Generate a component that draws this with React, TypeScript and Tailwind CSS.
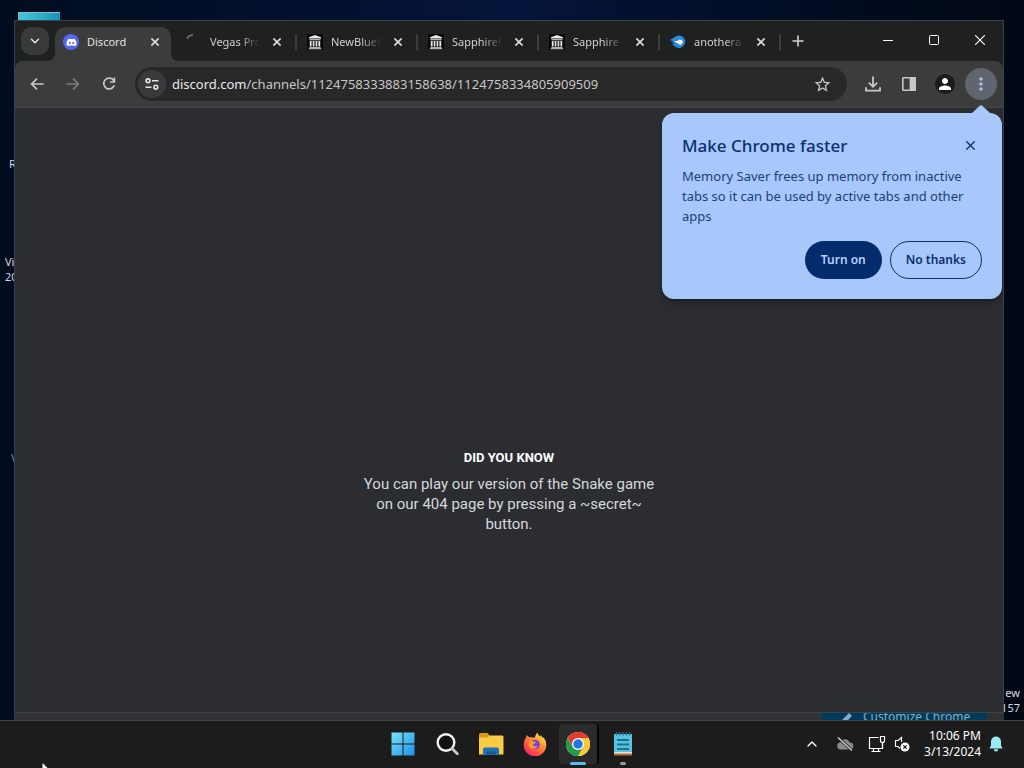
import { ChevronDown, ChevronUp, X } from "lucide-react";
import type { ReactNode } from "react";
import { FaDiscord } from "react-icons/fa";
import { MdMoreVert, MdPerson, MdStarBorder } from "react-icons/md";

type Tab = { title: string; icon: ReactNode };

const TABS: Tab[] = [
  { title: "Vegas Pro", icon: <SpinnerIcon /> },
  { title: "NewBlueF", icon: <ArchiveIcon /> },
  { title: "SapphireF", icon: <ArchiveIcon /> },
  { title: "Sapphire P", icon: <ArchiveIcon /> },
  { title: "anothera", icon: <CometIcon /> },
];

export default function App() {
  return (
    <div className="flex h-screen flex-col overflow-hidden bg-[#010a1b] font-['Noto_Sans',sans-serif]">
      <main className="relative flex min-h-0 flex-1 bg-linear-to-r from-[#010c1f] via-[#04143a] to-[#010814] pl-3.5 pr-5 pt-5">
        <DesktopIcons />
        <div className="relative flex min-w-0 flex-1 flex-col">
          <BrowserWindow />
          <BackWindow />
        </div>
      </main>
      <Taskbar />
    </div>
  );
}

function DesktopIcons() {
  return (
    <div className="text-[11px] leading-[15px] text-[#d5dae2]">
      <div className="absolute left-[18px] top-3 h-2.5 w-[42px] border-t border-[#7fb9cf] bg-linear-to-r from-[#45c9d8] to-[#1795b8]" />
      <span className="absolute left-[9px] top-[156px]">R</span>
      <span className="absolute left-[5px] top-[254px]">
        Vi
        <br />
        20
      </span>
      <span className="absolute left-[11px] top-[450px] text-[#8b919b]">V</span>
      <span className="absolute right-1 top-[685px] text-right">
        ew
        <br />
        157
      </span>
    </div>
  );
}

function BrowserWindow() {
  return (
    <section className="relative z-10 flex min-h-0 flex-1 flex-col border border-[#3a434b] bg-[#1f2120]">
      <TabStrip />
      <Toolbar />
      <DiscordPage />
    </section>
  );
}

function TabStrip() {
  return (
    <div className="flex h-10 shrink-0 items-end pl-1.5">
      <button
        aria-label="Search tabs"
        className="mb-1.5 mr-1.5 flex size-7 shrink-0 items-center justify-center rounded-[10px] bg-[#383938] text-[#e3e3e3]"
      >
        <ChevronDown size={14} strokeWidth={2.5} />
      </button>
      <div className="relative mr-[5px] flex h-[34px] w-[116px] shrink-0 items-center rounded-t-[10px] bg-[#3c3c3c] px-2 pb-1.5 pt-0.5 before:absolute before:-left-2 before:bottom-0 before:size-2 before:bg-[radial-gradient(circle_at_0_0,transparent_8px,#3c3c3c_8px)] after:absolute after:-right-2 after:bottom-0 after:size-2 after:bg-[radial-gradient(circle_at_100%_0,transparent_8px,#3c3c3c_8px)]">
        <span className="flex size-4 items-center justify-center rounded-full bg-[#5865f2] text-white">
          <FaDiscord size={11} />
        </span>
        <span className="ml-2 flex-1 text-[11px] text-[#e3e3e3]">Discord</span>
        <CloseTab title="Discord" />
      </div>
      {TABS.map((tab, i) => (
        <div key={i} className="flex h-[34px] w-[121px] shrink-0 items-center pb-1.5 pl-2.5 pt-0.5">
          {tab.icon}
          <span className="ml-2 w-[50px] overflow-hidden whitespace-nowrap mask-r-from-60% text-[11px] text-[#d0d0d0]">
            {tab.title}
          </span>
          <span className="flex-1" />
          <CloseTab title={tab.title} />
          <span className="ml-2.5 h-4 w-0.5 bg-[#3b3d3c]" />
        </div>
      ))}
      <button aria-label="New tab" className="mb-1.5 ml-[3px] flex size-7 items-center justify-center text-[#d0d0d0]">
        <svg width="12" height="12" stroke="currentColor" strokeWidth="1.6">
          <path d="M6 0.5v11M0.5 6h11" />
        </svg>
      </button>
      <div className="ml-auto flex h-full pb-0.5 text-white">
        <button aria-label="Minimize" className="flex w-[46px] items-center justify-center">
          <svg width="10" height="10" stroke="currentColor">
            <path d="M0 5.5h10" />
          </svg>
        </button>
        <button aria-label="Maximize" className="flex w-[46px] items-center justify-center">
          <svg width="10" height="10" fill="none" stroke="currentColor">
            <rect x="0.5" y="0.5" width="9" height="9" rx="1" />
          </svg>
        </button>
        <button aria-label="Close" className="flex w-[46px] items-center justify-center">
          <svg width="10" height="10" stroke="currentColor" strokeWidth="1.1">
            <path d="M0 0l10 10M10 0L0 10" />
          </svg>
        </button>
      </div>
    </div>
  );
}

function CloseTab({ title }: { title: string }) {
  return (
    <button aria-label={`Close ${title}`} className="flex size-4 items-center justify-center text-[#dedede]">
      <svg width="8" height="8" stroke="currentColor" strokeWidth="1.6">
        <path d="M0.4 0.4l7.2 7.2M7.6 0.4L0.4 7.6" />
      </svg>
    </button>
  );
}

function Toolbar() {
  return (
    <div className="flex h-[47px] shrink-0 items-center gap-1 rounded-t-lg border-b border-[#444546] bg-[#3c3c3c] px-1.5 text-[#c7c7c7]">
      <ToolButton label="Back">
        <svg width="14" height="12" fill="none" stroke="currentColor" strokeWidth="1.7">
          <path d="M13.5 6H1.5M7 0.7L1.6 6L7 11.3" />
        </svg>
      </ToolButton>
      <ToolButton label="Forward">
        <svg width="14" height="12" fill="none" stroke="#7b7b7b" strokeWidth="1.7">
          <path d="M0.5 6h12M7 0.7L12.4 6L7 11.3" />
        </svg>
      </ToolButton>
      <ToolButton label="Reload">
        <svg width="14" height="14" fill="none" stroke="currentColor" strokeWidth="1.7">
          <path d="M11.7 3.6A5.4 5.4 0 1 0 12.3 8.2M12.4 0.6V5H8" />
        </svg>
      </ToolButton>
      <div className="mx-1.5 flex h-[34px] min-w-0 flex-1 items-center rounded-full bg-[#282828] pl-[3px] pr-[15px]">
        <button
          aria-label="View site information"
          className="mr-1.5 flex size-7 items-center justify-center rounded-full bg-[#3a3a3a] text-[#e3e3e3]"
        >
          <svg width="14" height="12" fill="none" stroke="currentColor" strokeWidth="1.6">
            <circle cx="3" cy="2.8" r="1.9" />
            <path d="M7 2.8h6.5M0.5 9.2h6" />
            <circle cx="10.8" cy="9.2" r="1.9" />
          </svg>
        </button>
        <p className="flex-1 truncate pt-0.5 text-[13px] text-[#c7c7c7]">
          <span className="text-[#e8e8e8]">discord.com</span>/channels/1124758333883158638/1124758334805909509
        </p>
        <button aria-label="Bookmark this tab">
          <MdStarBorder size={19} />
        </button>
      </div>
      <ToolButton label="Downloads">
        <svg width="16" height="16" fill="none" stroke="currentColor" strokeWidth="1.8">
          <path d="M8 0.5v10M3.8 6.6L8 10.8l4.2-4.2M1 11.2v3.4h14v-3.4" />
        </svg>
      </ToolButton>
      <ToolButton label="Side panel">
        <svg width="14" height="14" fill="none" stroke="currentColor" strokeWidth="1.6">
          <rect x="0.8" y="0.8" width="12.4" height="12.4" rx="0.8" />
          <path d="M8.4 1h4.8v12H8.4z" fill="currentColor" />
        </svg>
      </ToolButton>
      <ToolButton label="Profile">
        <span className="flex size-5 items-center justify-center rounded-full bg-[#1b1b1b] text-white">
          <MdPerson size={18} />
        </span>
      </ToolButton>
      <div className="relative">
        <button
          aria-label="Chrome menu"
          className="flex size-8 items-center justify-center rounded-full bg-[#61656f] text-[#a8c0e8]"
        >
          <MdMoreVert size={20} />
        </button>
        <MemorySaverBubble />
      </div>
    </div>
  );
}

function ToolButton({ label, children }: { label: string; children: ReactNode }) {
  return (
    <button aria-label={label} className="flex size-8 shrink-0 items-center justify-center">
      {children}
    </button>
  );
}

function MemorySaverBubble() {
  return (
    <div
      role="dialog"
      aria-labelledby="bubble-title"
      className="absolute -right-[5px] top-[45px] z-20 w-[340px] rounded-xl bg-[#a8c7fa] px-5 pb-5 pt-[19px] text-[#0a3070] shadow-md shadow-black/30"
    >
      <svg className="absolute -top-2 right-3" width="18" height="8" fill="#a8c7fa">
        <path d="M0 8L8 0.6Q9 0 10 0.6L18 8z" />
      </svg>
      <div className="flex justify-between">
        <h2 id="bubble-title" className="text-[17px] font-medium leading-7">
          Make Chrome faster
        </h2>
        <button aria-label="Dismiss" className="mr-1 mt-[5px] flex size-4 items-center justify-center">
          <X size={15} strokeWidth={2.2} />
        </button>
      </div>
      <p className="mt-1.5 text-[13px] leading-5 text-[#1c3f7c]">
        Memory Saver frees up memory from inactive tabs so it can be used by active tabs and other apps
      </p>
      <div className="mt-[15px] flex justify-end gap-2 text-xs font-semibold">
        <button className="h-[38px] rounded-full bg-[#042c6c] px-4 text-[#b8d0fb]">Turn on</button>
        <button className="h-[38px] rounded-full border border-[#0a3070] px-[15px]">No thanks</button>
      </div>
    </div>
  );
}

function DiscordPage() {
  return (
    <div className="flex flex-1 flex-col items-center justify-center bg-[#2b2d30] pt-[164px] text-center font-['Roboto',sans-serif]">
      <h1 className="text-[13px] font-bold leading-4 text-white">DID YOU KNOW</h1>
      <p className="mt-2 w-[300px] text-[15px] leading-5 text-[#d5d8dc]">
        You can play our version of the Snake game on our 404 page by pressing a ~secret~ button.
      </p>
    </div>
  );
}

function BackWindow() {
  return (
    <div className="flex h-[7px] shrink-0 justify-end overflow-hidden bg-[#313233] pr-[17px]">
      <button className="flex h-7 w-[165px] items-start gap-2.5 bg-[#003a5a] pl-[18px] text-xs leading-[8px] text-[#82aecb]">
        <svg width="13" height="12" fill="currentColor">
          <path d="M0 12l1-4L9 0l3 3-8 8z" />
        </svg>
        Customize Chrome
      </button>
    </div>
  );
}

function Taskbar() {
  return (
    <footer className="relative grid h-12 shrink-0 grid-cols-[1fr_auto_1fr] items-center overflow-hidden border-t border-[#454545] bg-[#1c1c1c] pb-0.5 pl-0.5">
      <svg className="absolute bottom-0 left-[42px]" width="6" height="5">
        <path d="M0.5 0L5.5 5H0.5z" fill="#fff" />
      </svg>
      <nav className="col-start-2 flex gap-1">
        <TaskButton label="Start">
          <WindowsIcon />
        </TaskButton>
        <TaskButton label="Search">
          <svg width="24" height="24" fill="none" strokeWidth="2.4">
            <circle cx="11" cy="10.5" r="8.3" stroke="#f2f2f2" fill="#101010" />
            <path d="M17 16.5l5.3 5.3" stroke="#c9c9c9" strokeWidth="2.8" strokeLinecap="round" />
          </svg>
        </TaskButton>
        <TaskButton label="File Explorer">
          <FolderIcon />
        </TaskButton>
        <TaskButton label="Firefox">
          <FirefoxIcon />
        </TaskButton>
        <TaskButton label="Chrome" active>
          <ChromeIcon />
        </TaskButton>
        <TaskButton label="Notepad" running>
          <NotepadIcon />
        </TaskButton>
      </nav>
      <Tray />
    </footer>
  );
}

function TaskButton(props: { label: string; active?: boolean; running?: boolean; children: ReactNode }) {
  return (
    <button
      aria-label={props.label}
      className={`relative flex size-10 items-center justify-center rounded ${
        props.active ? "border-r-2 border-[#050505] bg-[#2b2b2b]" : ""
      }`}
    >
      {props.children}
      {props.active && <span className="absolute -bottom-px h-[3px] w-4 rounded-full bg-[#5cb8ee]" />}
      {props.running && <span className="absolute -bottom-px h-[3px] w-1.5 rounded-full bg-[#9a9a9a]" />}
    </button>
  );
}

function Tray() {
  return (
    <div className="flex items-center justify-end pr-[21px] text-white">
      <button aria-label="Show hidden icons" className="mr-4">
        <ChevronUp size={16} strokeWidth={2} />
      </button>
      <svg className="mr-3.5" width="18" height="16">
        <path d="M4.5 13.5a3.7 3.7 0 0 1-.3-7.3A5.2 5.2 0 0 1 13.6 6.5a3.5 3.5 0 0 1 .4 7z" fill="#8a8a8a" />
        <path d="M2 1.5l14 13" stroke="#1c1c1c" strokeWidth="3" />
        <path d="M2 1.5l14 13" stroke="#d8d8d8" strokeWidth="1.3" />
      </svg>
      <svg className="mr-2" width="18" height="18" fill="none" stroke="currentColor" strokeWidth="1.2">
        <path d="M10.5 2.5h-9v11h13V8M5.500 13.5v3M10.500 13.5v3M3.500 16.500h9" />
        <path d="M12.500 1.500h4v4a2 2 0 0 1-4 0zM14.500 7.500v3" />
      </svg>
      <svg className="mr-3.5" width="16" height="16" fill="none" stroke="currentColor" strokeWidth="1.2">
        <path d="M7.500 6V1.500L4 4.500H1.500v6H4l2 2" />
        <circle cx="11" cy="11" r="4.500" fill="#fff" stroke="none" />
        <path d="M9.300 9.300l3.400 3.400M12.700 9.300l-3.400 3.400" stroke="#1c1c1c" />
      </svg>
      <div className="whitespace-nowrap text-right text-xs leading-4">
        <p>10:06 PM</p>
        <p>3/13/2024</p>
      </div>
      <svg className="ml-2" width="14" height="16" fill="#9be9f5">
        <path d="M7 .5a5 5 0 0 1 5 5v3.7l1.6 3.3H.4L2 9.200V5.500a5 5 0 0 1 5-5z" />
        <path d="M4.800 13.300h4.400a2.200 2.200 0 0 1-4.400 0z" />
      </svg>
    </div>
  );
}

function SpinnerIcon() {
  return (
    <svg width="16" height="16" fill="none" stroke="#6f7170" strokeWidth="1.6">
      <path d="M1 4.5A8 8 0 0 1 7 0.8" />
    </svg>
  );
}

function ArchiveIcon() {
  return (
    <svg width="16" height="16">
      <path d="M0 0h16v16H0z" fill="#080808" />
      <path
        d="M8 1l6 2.300V4.500H2V3.300zM2.500 5.200h11v1h-11zM2.800 7h1.800v5.500H2.800zM5.700 7h1.700v5.500H5.700zM8.600 7h1.700v5.500H8.600zM11.400 7h1.800v5.500h-1.800zM2.300 13h11.400v.8H2.300zM1.800 14.300h12.400v1H1.800z"
        fill="#e8e8e8"
      />
    </svg>
  );
}

function CometIcon() {
  return (
    <svg width="16" height="16">
      <path d="M0 6L6 2.200A6.200 6.200 0 1 1 5 12.500L2 10h3L1 8h3z" fill="#2a8be0" />
      <path d="M4 7.200l4-.4a2.500 2.500 0 1 1 .3 3z" fill="#fff" />
    </svg>
  );
}

function WindowsIcon() {
  return (
    <svg width="24" height="24">
      <defs>
        <linearGradient id="win" gradientUnits="userSpaceOnUse" x1="0" y1="0" x2="24" y2="24">
          <stop stopColor="#7be6fb" />
          <stop offset="1" stopColor="#1a8fe6" />
        </linearGradient>
      </defs>
      <path d="M.5.5h11v11H.5zM12.5.5h11v11h-11zM.5 12.5h11v11H.5zM12.5 12.5h11v11h-11z" fill="url(#win)" />
    </svg>
  );
}

function FolderIcon() {
  return (
    <svg width="26" height="24">
      <path d="M1 2.500a1.500 1.500 0 0 1 1.500-1.500h6.800L12 3.500V8H1z" fill="#d79b14" />
      <path d="M1 5.500h8.500L12 3.500h12a1.500 1.500 0 0 1 1.500 1.500v17.500H1z" fill="#fbcb45" />
      <path d="M5 22.500V17.500a2 2 0 0 1 2-2h12a2 2 0 0 1 2 2v5z" fill="#1b72b8" />
      <path d="M8 22.500v-3h10v3z" fill="#14579a" />
    </svg>
  );
}

function FirefoxIcon() {
  return (
    <svg width="24" height="24">
      <defs>
        <linearGradient id="fox" x1="0.9" y1="0" x2="0.15" y2="1">
          <stop offset="0.1" stopColor="#ffe14a" />
          <stop offset="0.45" stopColor="#ff8a2a" />
          <stop offset="0.8" stopColor="#ff3a50" />
          <stop offset="1" stopColor="#e3208c" />
        </linearGradient>
      </defs>
      <path
        d="M14.500.500c.2 2 1.500 3 2.700 4.200l.8-1.800 1.700 3.200.8-.8A12 12 0 0 1 23.300 13 11.300 11.300 0 0 1 .700 13C.600 9.500 1.800 7 3.300 5.200L3.500 3l2.800 2.300c2.200-.3 4.200-.1 5.500.5.500-2 1.200-3.800 2.700-5.300z"
        fill="url(#fox)"
      />
      <circle cx="12" cy="12.5" r="4.800" fill="#7a3fdc" />
      <path d="M6 9.500c2-1.500 4-.7 5.200.2l2.300.3c-.6 1.500-2.700 1.400-3.500 2.500-.2 1.600 2 2.500 4.500 1.400-1 3.400-7 4-9 .1z" fill="#ff9a2e" />
    </svg>
  );
}

function ChromeIcon() {
  return (
    <svg width="24" height="24" viewBox="0 0 48 48">
      <circle cx="24" cy="24" r="24" fill="#fff" />
      <path d="M24 12h20.800A24 24 0 0 0 3.200 12l10.400 18z" fill="#e33b2e" />
      <path d="M34.400 30L24 48A24 24 0 0 0 44.800 12H24z" fill="#fcc934" />
      <path d="M13.600 30L3.200 12A24 24 0 0 0 24 48l10.400-18z" fill="#259b4a" />
      <circle cx="24" cy="24" r="12" fill="#fff" />
      <circle cx="24" cy="24" r="9.500" fill="#1f74e8" />
    </svg>
  );
}

function NotepadIcon() {
  return (
    <svg width="20" height="24">
      <path d="M1 2h18v19H1z" fill="#58c4de" />
      <path d="M1 20h18v3H1z" fill="#e8e1d8" />
      <path d="M1 21.500h18V23.500H1z" fill="#b9733a" />
      <path d="M3.500 0v3.500M6.800 0v3.500M10 0v3.500M13.300 0v3.500M16.500 0v3.500" stroke="#2a6d8c" strokeWidth="1.4" />
      <path d="M4 8h12M4 12.500h12M4 17h12" stroke="#1d6f90" strokeWidth="1.8" />
    </svg>
  );
}
